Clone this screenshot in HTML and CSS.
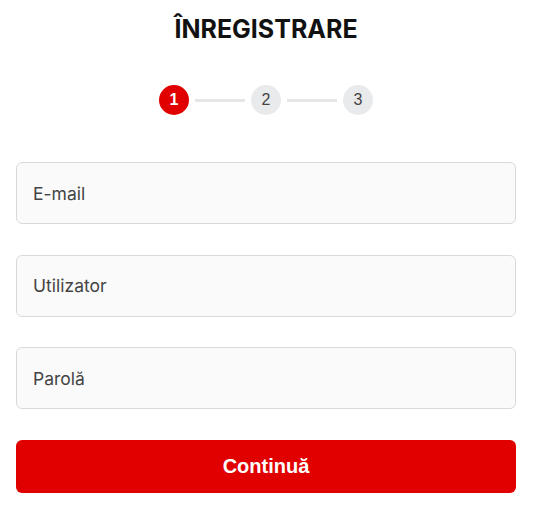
FILE: index.html
```html
<!DOCTYPE html>
<html>
  <head>
    <title>Înregistrare</title>
    <link rel="stylesheet" href="styles.css">
  </head>
  <body>
    <div id="register-container">
      <h2>ÎNREGISTRARE</h2>

      <!-- Steps -->
      <div class="steps">
        <div class="circle active">1</div>
        <div class="line"></div>
        <div class="circle">2</div>
        <div class="line"></div>
        <div class="circle">3</div>
      </div>

      <form class="form">
        <input type="email" placeholder="E-mail">
        <input type="text" placeholder="Utilizator">
        <input type="password" placeholder="Parolă">
        <button type="button" id="continueBtn">Continuă</button>
      </form>
    </div>
  </body>
</html>
```

FILE: styles.css
```css
body {
  font-family: Inter, "Liberation Sans", sans-serif;
  background-color: #fff;
  margin: 0;
  padding: 0;
}

#register-container {
  width: 500px;
  margin-left: 16px;
  padding-top: 14px;
}

h2 {
  margin: 0;
  text-align: center;
  font-size: 25px;
  font-weight: 700;
  line-height: 30px;
  color: #111;
}

/* Steps */
.steps {
  display: flex;
  justify-content: center;
  align-items: center;
  margin-top: 41px;
}

.circle {
  width: 30px;
  height: 30px;
  border-radius: 50%;
  background-color: #e9eaec;
  color: #444;
  font-family: "Liberation Sans", Arial, sans-serif;
  font-size: 16px;
  line-height: 30px;
  text-align: center;
}

.circle.active {
  background-color: #e00000;
  color: #fff;
  font-weight: bold;
}

.line {
  width: 50px;
  height: 3px;
  margin: 0 6px;
  background-color: #e6e7e9;
}

/* Form */
.form {
  display: flex;
  flex-direction: column;
  gap: 30.5px;
  margin-top: 47px;
}

.form input {
  height: 62px;
  box-sizing: border-box;
  padding: 0 16px;
  border: 1px solid #d9d9d9;
  border-radius: 6px;
  background-color: #fafafa;
  font-family: Inter, sans-serif;
  font-size: 17.5px;
  color: #333;
  outline: none;
}

.form input::placeholder {
  color: #444;
}

#continueBtn {
  height: 53px;
  border: none;
  border-radius: 6px;
  background-color: #e00000;
  color: #fff;
  font-family: "Liberation Sans", Arial, sans-serif;
  font-size: 20px;
  font-weight: bold;
  cursor: pointer;
}
```
